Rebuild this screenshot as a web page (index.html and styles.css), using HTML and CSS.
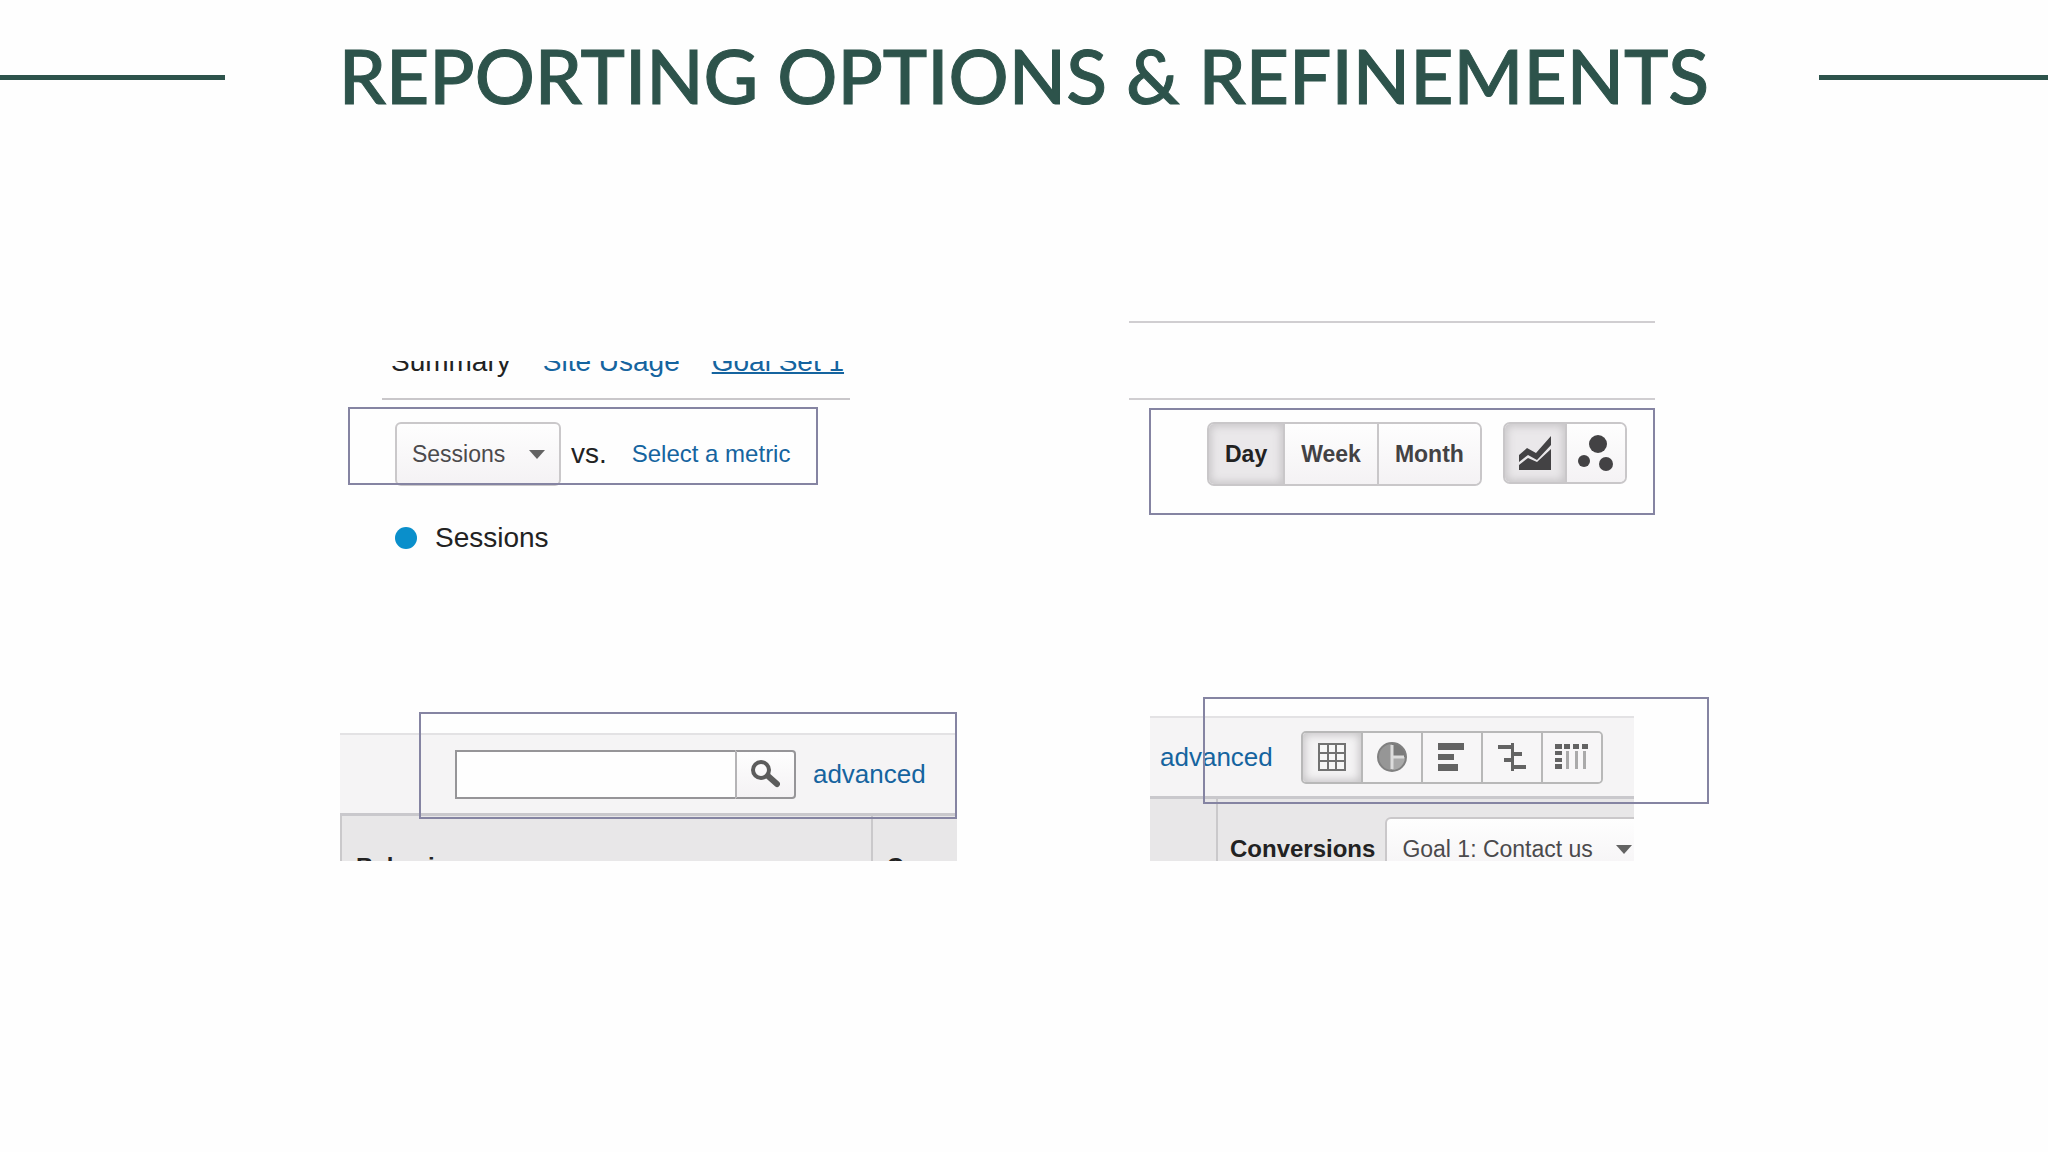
FILE: index.html
```html
<!DOCTYPE html>
<html lang="en">
<head>
    <meta charset="UTF-8">
    <meta name="viewport" content="width=device-width, initial-scale=1.0">
    <title>Reporting Options &amp; Refinements</title>
    <link rel="stylesheet" href="styles.css">
</head>
<body>
    <header class="title-bar">
        <span class="rule"></span>
        <h1>REPORTING OPTIONS &amp; REFINEMENTS</h1>
        <span class="rule"></span>
    </header>
    <main class="board">
        <!-- Metric picker -->
        <section class="shot metric">
            <nav class="tabs">
                <span>Summary</span>
                <a href="#usage">Site Usage</a>
                <a href="#goals" class="current">Goal Set 1</a>
            </nav>
            <div class="metric-row">
                <div class="picker">
                    <select class="metric-select" aria-label="Metric">
                        <option>Sessions</option>
                    </select>
                    <svg class="arrow" viewBox="0 0 16 9"><path d="M0 0h16L8 9z"/></svg>
                </div>
                <span class="vs">vs.</span>
                <a href="#metric">Select a metric</a>
            </div>
            <div class="legend"><span class="dot"></span>Sessions</div>
            <div class="highlight"></div>
        </section>

        <!-- Time range and chart type -->
        <section class="shot range">
            <div class="range-row">
                <div class="group periods">
                    <button type="button" class="active">Day</button>
                    <button type="button">Week</button>
                    <button type="button">Month</button>
                </div>
                <div class="group charts">
                    <button type="button" class="active" aria-label="Line chart">
                        <svg width="34" height="36" viewBox="0 0 34 36">
                            <path d="M1 20l8-7 9 5L33 1v9L19 25l-9-5-9 7z"/>
                            <path d="M1 35v-5l9-7 9 4 14-13v21z"/>
                        </svg>
                    </button>
                    <button type="button" aria-label="Motion chart">
                        <svg width="36" height="36" viewBox="0 0 36 36">
                            <circle cx="20" cy="9" r="9"/>
                            <circle cx="6" cy="26" r="6"/>
                            <circle cx="28" cy="29" r="7"/>
                        </svg>
                    </button>
                </div>
            </div>
            <div class="highlight"></div>
        </section>

        <!-- Table search -->
        <section class="shot search">
            <div class="clip">
                <div class="toolbar">
                    <form class="search-box">
                        <input type="text" aria-label="Search">
                        <button type="button" aria-label="Search table">
                            <svg width="30" height="28" viewBox="0 0 30 28">
                                <circle cx="11" cy="10" r="8" fill="none" stroke="#5c5c5c" stroke-width="4"/>
                                <path d="M18 16l9 8" fill="none" stroke="#5c5c5c" stroke-width="6" stroke-linecap="round"/>
                            </svg>
                        </button>
                    </form>
                    <a href="#advanced">advanced</a>
                </div>
                <table>
                    <thead>
                        <tr>
                            <th class="behavior">Behavior</th>
                            <th>Conversions</th>
                        </tr>
                    </thead>
                </table>
            </div>
            <div class="highlight"></div>
        </section>

        <!-- Table views -->
        <section class="shot views">
            <div class="clip">
                <div class="toolbar">
                    <a href="#advanced">advanced</a>
                    <div class="group view-buttons">
                        <button type="button" class="active" aria-label="Data">
                            <svg width="28" height="28" viewBox="0 0 28 28">
                                <path d="M0 0h28v28H0z" fill="#727272"/>
                                <path d="M2 2h7v7H2zM11 2h6v7h-6zM19 2h7v7h-7zM2 11h7v6H2zM11 11h6v6h-6zM19 11h7v6h-7zM2 19h7v7H2zM11 19h6v7h-6zM19 19h7v7h-7z" fill="#f7f7f7"/>
                            </svg>
                        </button>
                        <button type="button" aria-label="Percentage">
                            <svg width="30" height="30" viewBox="0 0 30 30">
                                <circle cx="15" cy="15" r="14" fill="#969696"/>
                                <path d="M15 15V1a14 14 0 0 1 14 14z" fill="#7b7b7b"/>
                                <path d="M15 15h14a14 14 0 0 1-14 14z" fill="#a9a9a9"/>
                                <path d="M15 3v24M15 15h12" fill="none" stroke="#dcdcdc" stroke-width="3"/>
                                <circle cx="15" cy="15" r="14" fill="none" stroke="#808080" stroke-width="2"/>
                            </svg>
                        </button>
                        <button type="button" aria-label="Performance">
                            <svg width="28" height="28" viewBox="0 0 28 28">
                                <path d="M0 0h26v7H0zM0 11h16v6H0zM0 21h20v7H0z"/>
                            </svg>
                        </button>
                        <button type="button" aria-label="Comparison">
                            <svg width="28" height="28" viewBox="0 0 28 28">
                                <path d="M13 0h3v28h-3zM0 2h13v4H0zM16 9h8v4h-8zM6 15h7v4H6zM16 22h12v4H16z"/>
                            </svg>
                        </button>
                        <button type="button" aria-label="Pivot">
                            <svg width="34" height="26" viewBox="0 0 34 26">
                                <path d="M0 0h7v5H0zM9 0h6v5H9zM18 0h6v5h-6zM27 0h6v5h-6zM0 7h7v4H0zM0 14h7v4H0zM0 20h7v5H0z"/>
                                <path d="M11 7h3v18h-3zM20 7h3v18h-3zM28 7h3v18h-3z" fill="#aaa"/>
                            </svg>
                        </button>
                    </div>
                </div>
                <table>
                    <thead>
                        <tr>
                            <th class="blank"></th>
                            <th>
                                <div class="goal">
                                    <label for="goal">Conversions</label>
                                    <div class="picker">
                                        <select id="goal" class="goal-select">
                                            <option>Goal 1: Contact us</option>
                                        </select>
                                        <svg class="arrow" viewBox="0 0 16 9"><path d="M0 0h16L8 9z"/></svg>
                                    </div>
                                </div>
                            </th>
                        </tr>
                    </thead>
                </table>
            </div>
            <div class="highlight"></div>
        </section>
    </main>
</body>
</html>
```
FILE: styles.css
```css
* {
    box-sizing: border-box;
}
body {
    font-family: "Liberation Sans", Arial, sans-serif;
    font-size: 24px;
    line-height: 28px;
    margin: 0;
    background-color: #fefefe;
    color: #222;
}
a {
    color: #15649f;
    text-decoration: none;
}
svg {
    display: block;
    fill: #636363;
}

/* Title */
.title-bar {
    display: flex;
    align-items: center;
    height: 154px;
}
.title-bar h1 {
    flex: 1;
    margin: 0;
    padding: 0 0 4px 4px;
    font-family: Lato, "Gill Sans", sans-serif;
    font-size: 75px;
    font-weight: 500;
    line-height: 96px;
    color: #2d534b;
    -webkit-text-stroke: 1px #2d534b;
    text-align: center;
    white-space: nowrap;
}
.rule {
    width: 11%;
    height: 5px;
    background-color: #2d534b;
}
.rule:last-child {
    width: 11.2%;
}

/* Board */
.board {
    display: grid;
    grid-template-columns: 789fr 579fr;
    align-items: end;
    row-gap: 164px;
    padding: 167px 16.6% 0;
}
.shot {
    position: relative;
}
.highlight {
    position: absolute;
    border: 2px solid #8584a2;
    pointer-events: none;
}
.clip {
    overflow: hidden;
}

/* Metric picker */
.metric {
    width: 468px;
    margin-left: 42px;
}
.tabs {
    display: flex;
    align-items: flex-end;
    gap: 32px;
    height: 39px;
    padding: 0 0 22px 9px;
    font-size: 28px;
    overflow: hidden;
    border-bottom: 2px solid #c9c7ca;
}
.tabs .current {
    text-decoration: underline;
    text-decoration-thickness: 2px;
}
.metric-row {
    display: flex;
    align-items: center;
    padding: 22px 0 0 13px;
}
.picker {
    position: relative;
}
.picker select {
    appearance: none;
    height: 64px;
    padding: 0 15px;
    border: 2px solid #cac8ca;
    border-radius: 6px;
    background: linear-gradient(#fefefe, #f4f2f4);
    font: inherit;
    font-size: 23px;
    font-weight: normal;
    color: #4b4a4c;
}
.picker .arrow {
    position: absolute;
    right: 16px;
    top: 28px;
    width: 16px;
    height: 9px;
}
.metric-select {
    width: 166px;
}
.vs {
    margin: 0 25px 0 10px;
    font-size: 28px;
}
.legend {
    display: flex;
    align-items: center;
    gap: 18px;
    padding: 38px 0 0 13px;
    font-size: 28px;
}
.dot {
    width: 22px;
    height: 22px;
    border-radius: 50%;
    background-color: #0a8fcb;
}
.metric .highlight {
    left: -34px;
    right: 32px;
    top: 46px;
    height: 78px;
}

/* Button groups */
.group {
    display: flex;
    border: 2px solid #c9c7c9;
    border-radius: 7px;
    overflow: hidden;
}
.group button {
    display: flex;
    align-items: center;
    justify-content: center;
    padding: 0;
    border: 0;
    border-left: 2px solid #c9c7c9;
    background: linear-gradient(#fefefe, #f4f2f4);
    font: bold 23px "Liberation Sans", Arial, sans-serif;
    color: #434244;
}
.group button:first-child {
    border-left: 0;
}
.group .active {
    background: #eae8ea;
    box-shadow: inset 0 0 8px 2px #c6c4c6;
    color: #222;
}

/* Time range and chart type */
.range {
    height: 231px;
    border-top: 2px solid #d0ced1;
    padding-top: 75px;
    margin-right: 53px;
}
.range-row {
    display: flex;
    align-items: flex-start;
    gap: 21px;
    border-top: 2px solid #d0ced1;
    padding: 22px 0 0 78px;
}
.periods button {
    height: 60px;
    padding: 0 16px;
}
.charts button {
    width: 60px;
    height: 58px;
}
.charts svg {
    fill: #434244;
}
.range .highlight {
    left: 20px;
    right: 0;
    top: 85px;
    height: 107px;
}

/* Table toolbars */
.toolbar {
    display: flex;
    align-items: center;
    height: 80px;
    border-top: 2px solid #e3e2e4;
    background-color: #f5f4f5;
    font-size: 26px;
}
table {
    width: 100%;
    table-layout: fixed;
    border-collapse: separate;
    border-spacing: 0;
    border-top: 3px solid #c9c8cc;
    background-color: #e8e7e8;
}
th {
    padding: 0;
    border-left: 2px solid #cac9cb;
    text-align: left;
    vertical-align: top;
}

/* Table search */
.search {
    width: 78.2%;
}
.search .clip {
    height: 128px;
}
.search .toolbar {
    gap: 17px;
    padding-left: 115px;
}
.search-box {
    display: flex;
}
.search-box input {
    width: 280px;
    height: 49px;
    padding: 0 8px;
    border: 2px solid #969598;
    border-right: 0;
    background-color: #fefefe;
    font: inherit;
}
.search-box button {
    display: flex;
    align-items: center;
    justify-content: center;
    width: 61px;
    padding: 0;
    border: 2px solid #969598;
    border-left-color: #b5b4b6;
    border-radius: 0 4px 4px 0;
    background: linear-gradient(#fefefe, #f4f2f4);
}
.search th {
    padding: 37px 0 0 14px;
}
.search .behavior {
    width: 86%;
}
.search .highlight {
    left: 79px;
    right: 0;
    top: -21px;
    height: 107px;
}

/* Table views */
.views {
    margin: 0 74px 0 21px;
}
.views .clip {
    height: 145px;
}
.views .toolbar {
    gap: 28px;
    padding-left: 10px;
}
.view-buttons {
    border-color: #b8b8b8;
    border-radius: 5px;
}
.view-buttons button {
    width: 60px;
    height: 49px;
    border-color: #b8b8b8;
    background: #f7f6f7;
}
.view-buttons button:first-child {
    width: 58px;
}
.view-buttons .active {
    background: #f4f3f4;
}
.views .blank {
    width: 66px;
    border-left: 0;
}
.goal {
    display: flex;
    align-items: center;
    gap: 10px;
    padding: 18px 0 0 12px;
}
.goal-select {
    width: 263px;
}
.views .highlight {
    left: 53px;
    right: -75px;
    top: -19px;
    height: 107px;
}
```
